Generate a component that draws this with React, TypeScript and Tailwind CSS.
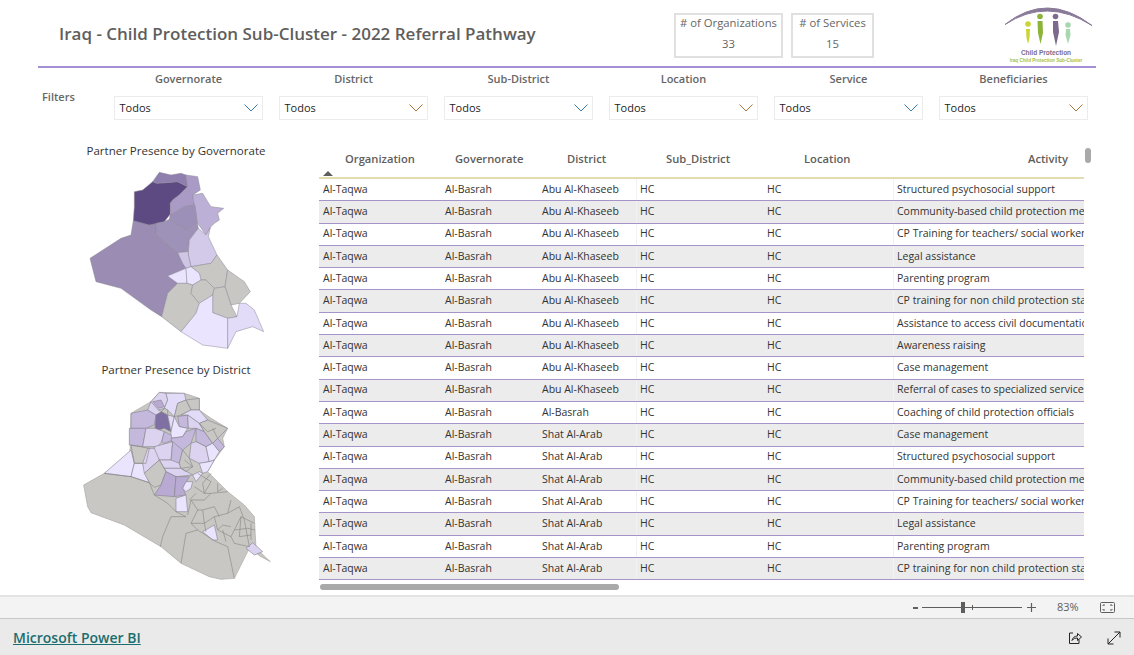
const FONT = "font-['Open_Sans','Noto_Sans',sans-serif]";

const filters = [
  { label: 'Governorate', tint: '#3a7ca8' },
  { label: 'District', tint: '#a8753a' },
  { label: 'Sub-District', tint: '#3a7ca8' },
  { label: 'Location', tint: '#a8753a' },
  { label: 'Service', tint: '#3a7ca8' },
  { label: 'Beneficiaries', tint: '#a8753a' },
];

const rows = [
  ['Abu Al-Khaseeb', 'Structured psychosocial support'],
  ['Abu Al-Khaseeb', 'Community-based child protection mechanisms'],
  ['Abu Al-Khaseeb', 'CP Training for teachers/ social workers'],
  ['Abu Al-Khaseeb', 'Legal assistance'],
  ['Abu Al-Khaseeb', 'Parenting program'],
  ['Abu Al-Khaseeb', 'CP training for non child protection staff'],
  ['Abu Al-Khaseeb', 'Assistance to access civil documentation'],
  ['Abu Al-Khaseeb', 'Awareness raising'],
  ['Abu Al-Khaseeb', 'Case management'],
  ['Abu Al-Khaseeb', 'Referral of cases to specialized services'],
  ['Al-Basrah', 'Coaching of child protection officials'],
  ['Shat Al-Arab', 'Case management'],
  ['Shat Al-Arab', 'Structured psychosocial support'],
  ['Shat Al-Arab', 'Community-based child protection mechanisms'],
  ['Shat Al-Arab', 'CP Training for teachers/ social workers'],
  ['Shat Al-Arab', 'Legal assistance'],
  ['Shat Al-Arab', 'Parenting program'],
  ['Shat Al-Arab', 'CP training for non child protection staff'],
];

const governorates: [string, string][] = [
  ['#9a8cb3', '187,242 235,255 255,250 255,280 285,310 320,338 335,370 345,385 290,408 320,430 290,460 272,530 240,510 150,445 75,425 57,355 150,295 180,285'],
  ['#5d4a82', '190,155 215,150 245,125 258,130 320,125 350,140 325,165 305,180 298,190 298,222 280,245 235,255 187,242 190,200'],
  ['#8e7fae', '245,125 265,97 300,105 330,100 345,105 350,140 320,125 258,130'],
  ['#a99bc5', '350,140 345,105 380,110 388,150 365,165 370,195 340,200 300,225 298,190 305,180 325,165'],
  ['#bdb0d6', '365,165 395,160 410,185 420,200 458,205 440,220 445,240 430,250 418,262 405,285 380,250 378,245 372,198 370,195'],
  ['#9d90b8', '298,222 300,225 340,200 370,195 372,198 378,245 350,272 295,238'],
  ['#9e92b8', '255,250 280,245 295,238 350,272 378,245 382,265 355,300 352,335 345,335 320,338 285,310 255,280'],
  ['#d3c9e8', '382,265 405,285 418,262 412,290 438,345 420,370 360,380 352,345 352,335 355,300'],
  ['#cfc5e5', '345,335 352,335 352,345 360,380 345,385 335,370 320,338'],
  ['#c8c7c4', '360,380 420,370 438,345 470,390 462,440 430,445 405,420 390,420 385,400'],
  ['#ebe4ff', '290,408 345,385 348,430 320,430'],
  ['#ebe4ff', '345,385 360,380 385,400 390,420 365,435 348,430'],
  ['#c8c7c4', '320,430 348,430 365,435 360,460 385,490 375,520 330,575 272,530 290,460'],
  ['#c8c7c4', '365,435 390,420 405,420 430,445 425,465 385,490 360,460'],
  ['#c8c7c4', '470,390 520,425 538,455 505,490 480,495 462,440'],
  ['#c8c7c4', '430,445 462,440 480,495 498,530 470,535 425,518 425,465'],
  ['#ebe4ff', '385,490 425,465 425,518 470,535 470,625 395,615 330,575 375,520'],
  ['#e3dcf8', '470,535 498,530 505,490 525,490 550,510 578,575 545,560 495,575 470,625'],
];

const districts: [string, string][] = [
  ['#dcd3f0', '240,125 265,97 285,100 290,120 280,145 262,150 240,145'],
  ['#b8aad2', '245,125 270,120 280,140 262,145'],
  ['#e3dcf8', '285,100 340,100 345,120 320,130 310,170 290,150 280,145 290,120'],
  ['#c4b8dd', '180,160 230,150 255,165 250,195 225,205 180,205'],
  ['#dcd3f0', '230,150 240,125 262,150 272,155 255,165'],
  ['#7f6fa3', '255,165 272,155 290,165 300,215 280,205 262,210 252,205'],
  ['#e3dcf8', '290,165 310,170 300,215'],
  ['#c4b8dd', '175,205 225,205 215,260 175,255'],
  ['#dcd3f0', '225,205 252,205 280,215 272,245 260,260 215,260'],
  ['#c4b8dd', '320,170 350,165 352,205 325,200'],
  ['#ebe4ff', '300,215 310,170 325,200 350,205 335,230 300,235'],
  ['#c4b8dd', '272,245 280,215 300,225 305,240 280,250'],
  ['#c4b8dd', '300,235 335,230 345,215 375,205 360,250 335,270 305,262'],
  ['#c8c7c4', '345,120 385,115 385,150 360,150'],
  ['#c8c7c4', '310,170 320,130 345,120 360,150 330,165'],
  ['#c8c7c4', '280,145 290,150 290,165 272,155'],
  ['#e3dcf8', '330,165 360,150 385,150 410,180 385,190 350,165'],
  ['#dcd3f0', '350,165 385,190 400,215 375,205 352,205'],
  ['#c4b8dd', '375,205 400,215 425,250 405,260 375,245'],
  ['#c8c7c4', '385,190 410,180 470,205 440,235 425,250 400,215'],
  ['#dcd3f0', '360,250 375,245 405,260 415,305 385,310 355,295'],
  ['#c4b8dd', '425,250 440,235 460,260 445,275'],
  ['#ebe4ff', '405,260 425,250 445,275 430,300 415,305'],
  ['#dcd3f0', '250,260 305,245 300,300 265,300 250,280'],
  ['#c4b8dd', '305,245 335,270 325,310 300,305'],
  ['#dcd3f0', '265,300 300,300 325,310 330,325 280,325'],
  ['#c8c7c4', '335,270 355,295 365,320 330,325 325,310'],
  ['#dcd3f0', '280,325 330,325 365,345 315,350 285,335'],
  ['#ebe4ff', '100,340 180,270 190,310 180,350'],
  ['#ebe4ff', '180,350 190,310 215,310 235,368'],
  ['#dcd3f0', '215,310 230,265 250,265 265,300 220,340'],
  ['#c8c7c4', '235,368 220,340 265,300 285,335 270,375 250,382'],
  ['#b8aad2', '250,405 270,375 285,335 315,350 310,410'],
  ['#b8aad2', '315,350 355,350 335,385 345,405 310,410'],
  ['#ebe4ff', '315,415 345,405 350,455 315,455'],
  ['#ebe4ff', '365,345 385,335 395,340 375,365'],
  ['#ebe4ff', '345,365 365,365 360,385 345,395 335,385'],
  ['#ebe4ff', '385,310 415,305 430,300 410,335 395,340'],
  ['#ebe4ff', '395,515 430,495 440,540 425,540'],
  ['#dcd3f0', '525,565 545,548 575,575 550,585'],
];

const districtLines = [
  '100,340 180,350 235,368 250,405 290,430 315,455 345,470',
  '345,470 300,470 275,530 268,560',
  '380,510 345,520 330,610',
  '380,510 435,545 470,560 490,655',
  '350,465 360,420 400,420 420,400 470,395',
  '360,420 380,450 360,490 400,490 430,470 470,460 480,420',
  '430,470 440,510 480,530 510,470 550,490',
  '480,530 490,550 535,560 520,480',
  '400,490 405,515',
  '370,380 400,400 420,400',
  '400,400 395,370 420,340',
  '440,370 440,395 455,385',
  '540,490 540,540',
  '470,460 505,440 520,480',
  '455,510 465,545',
  '510,470 505,530',
  '395,450 430,440 445,470',
  '380,450 395,450 400,490',
  '360,490 380,510',
  '490,510 530,505 552,510',
  '505,530 540,525',
  '440,510 455,495 480,500',
  '375,400 355,420',
  '385,190 410,215 435,205',
  '440,235 425,205',
  '180,255 235,265 225,310 190,310 180,255',
  '340,300 365,320 345,335 330,325',
  '380,340 420,365 400,400',
];

const OUTLINE =
  '38,375 100,340 175,290 178,255 180,160 240,125 265,97 340,100 385,115 385,150 420,175 470,205 455,235 460,260 430,300 410,335 470,395 520,435 550,470 552,510 555,565 598,605 570,590 535,565 490,655 450,658 415,650 330,610 270,560 160,495 60,458 50,440';

function GovernorateMap() {
  return (
    <svg width="210" height="220" viewBox="0 0 630 660">
      {governorates.map(([fill, points], i) => (
        <polygon key={i} points={points} fill={fill} stroke="#8a8794" strokeWidth="1.500" strokeLinejoin="round" />
      ))}
    </svg>
  );
}

function DistrictMap() {
  return (
    <svg width="210" height="220" viewBox="0 0 630 660">
      <polygon points={OUTLINE} fill="#c8c7c4" stroke="#a9a8a5" strokeWidth="2" />
      {districts.map(([fill, points], i) => (
        <polygon key={i} points={points} fill={fill} stroke="#85838c" strokeWidth="1.800" strokeLinejoin="round" />
      ))}
      {districtLines.map((points, i) => (
        <polyline key={i} points={points} fill="none" stroke="#85857f" strokeWidth="1.800" />
      ))}
    </svg>
  );
}

function Logo() {
  return (
    <svg width="96" height="66" viewBox="1000 0 96 66">
      <path d="M1005 24.500 Q1047 -9 1092 25.500 Q1047 -3 1005 24.500 Z" fill="#8a7a9a" stroke="#8a7a9a" strokeWidth="1" />
      <circle cx="1028" cy="24" r="2.800" fill="#c9d530" />
      <path d="M1026 29 h4 l-.5 9 l-1.500 6 l-1.500 -6 Z" fill="#c9d530" />
      <circle cx="1040" cy="16.500" r="2.800" fill="#8cb33a" />
      <path d="M1037.500 21 h5 l.5 12 l-2.500 11 l-2.500 -11 Z" fill="#8cb33a" />
      <circle cx="1055.500" cy="16.500" r="2.800" fill="#7d6a8c" />
      <path d="M1053 21 h5 l1 11 l-3 14 l-3 -14 Z" fill="#7d6a8c" />
      <circle cx="1068" cy="25" r="2.800" fill="#a8d8b0" />
      <path d="M1066 29 h4 l.5 6 l-2.500 9 l-2.500 -9 Z" fill="#a8d8b0" />
      <text x="1046" y="55" textAnchor="middle" fontSize="6.500" fontWeight="700" fill="#7d6a8c" fontFamily="Liberation Sans, sans-serif">
        Child Protection
      </text>
      <text x="1046" y="62" textAnchor="middle" fontSize="4.600" fontWeight="700" fill="#a3c14a" fontFamily="Liberation Sans, sans-serif">
        Iraq Child Protection Sub-Cluster
      </text>
    </svg>
  );
}

export default function App() {
  return (
    <div className={`flex h-[655px] w-[1134px] flex-col overflow-hidden bg-white ${FONT}`}>
      <div className="h-[595px] shrink-0">
        {/* Title, cards and logo */}
        <div className="mx-[38px] flex h-[68px] items-start border-b-2 border-[#a48fd6]">
          <h1 className="mt-[22px] ml-[21px] w-[615px] shrink-0 text-[17px] leading-6 font-semibold whitespace-nowrap text-[#605e5c]">
            Iraq - Child Protection Sub-Cluster - 2022 Referral Pathway
          </h1>
          <div className="mt-[13px] flex h-[45px] w-[109px] shrink-0 flex-col items-center border-2 border-[#e0e0e0] text-[11.300px] leading-4 text-[#666666]">
            <span># of Organizations</span>
            <span className="mt-[5px]">33</span>
          </div>
          <div className="mt-[13px] ml-2 flex h-[45px] w-[83px] shrink-0 flex-col items-center border-2 border-[#e0e0e0] text-[11.300px] leading-4 text-[#666666]">
            <span># of Services</span>
            <span className="mt-[5px]">15</span>
          </div>
          <div className="ml-[126px] shrink-0">
            <Logo />
          </div>
        </div>

        {/* Filters */}
        <div className="flex pt-[3px] pl-[42px]">
          <span className="mt-[18px] w-[72px] text-[11px] leading-4 font-semibold text-[#666666]">Filters</span>
          <div className="flex gap-4">
            {filters.map((f) => (
              <div key={f.label} className="w-[149px]">
                <div className="text-center text-[11px] leading-4 font-semibold text-[#666666]">{f.label}</div>
                <div className="mt-[9px] flex h-[24px] items-center justify-between border border-[#ececec] pr-[4px] pl-[4.500px] text-[11px] text-[#252423]">
                  <span>Todos</span>
                  <svg width="14" height="8" viewBox="0 0 14 8" fill="none" stroke={f.tint}>
                    <path d="M.5 .5L7 7L13.500 .5" />
                  </svg>
                </div>
              </div>
            ))}
          </div>
        </div>

        <div className="mt-[23px] flex items-start">
          {/* Maps */}
          <div className="flex w-[319px] flex-col pl-[71px]">
            <div className="w-[210px] text-center text-[11.500px] leading-4 text-[#333333]">Partner Presence by Governorate</div>
            <div className="-mt-[19px] h-[220px]">
              <GovernorateMap />
            </div>
            <div className="mt-[2px] w-[210px] text-center text-[11.500px] leading-4 text-[#333333]">Partner Presence by District</div>
            <div className="-mt-[18px] h-[220px]">
              <DistrictMap />
            </div>
          </div>

          {/* Table */}
          <div className="relative -mt-[1px] w-[772px]">
            <div className="w-[765px] overflow-hidden">
              <div className="grid h-[37px] grid-cols-[122px_97px_98px_127px_130px_191px] items-center border-b-2 border-[#e3dcae] text-[11.200px] font-semibold text-[#605e5c]">
                <span className="relative pl-[26px]">
                  Organization
                  <svg className="absolute top-[20px] left-[4px]" width="10" height="6" viewBox="0 0 10 6">
                    <polygon points="0,5 5,0 10,5" fill="#605e5c" />
                  </svg>
                </span>
                <span className="pl-[14px]">Governorate</span>
                <span className="pl-[29px]">District</span>
                <span className="pl-[30px]">Sub_District</span>
                <span className="pl-[41px]">Location</span>
                <span className="pr-[16px] text-right">Activity</span>
              </div>
              {rows.map(([district, activity], i) => (
                <div
                  key={i}
                  className={`grid h-[22.300px] grid-cols-[122px_97px_98px_127px_130px_191px] items-center border-b border-[#a594c9] text-[10.500px] whitespace-nowrap text-[#333333] ${
                    i % 2 === 1 ? 'bg-[#ececec]' : 'bg-white'
                  }`}
                >
                  <span className="pl-1">Al-Taqwa</span>
                  <span className="pl-1">Al-Basrah</span>
                  <span className="pl-1">{district}</span>
                  <span className="flex h-full items-center border-l border-[#f2f2f2] pl-[3px]">HC</span>
                  <span className="pl-1">HC</span>
                  <span className="flex h-full items-center overflow-hidden border-l border-[#f2f2f2] pl-[3px]">{activity}</span>
                </div>
              ))}
            </div>
            <div className="mt-[4px] ml-px h-[6px] w-[299px] rounded-full bg-[#a9a9a9]" />
            <div className="absolute top-[6px] left-[766px] h-[15px] w-[6px] rounded-full bg-[#a9a9a9]" />
          </div>
        </div>
      </div>

      {/* Zoom bar */}
      <div className="flex h-[23px] shrink-0 items-center border-t-2 border-[#e3e3e3] bg-[#f3f3f3] pl-[913px] text-[11px] text-[#605e5c]">
        <span className="h-[2px] w-[5px] bg-[#605e5c]" />
        <div className="relative ml-[4px] flex h-[11px] w-[100px] items-center">
          <div className="h-px w-full bg-[#605e5c]" />
          <div className="absolute left-[39px] h-[11px] w-[4px] bg-[#605e5c]" />
          <div className="absolute left-[50px] h-[5px] w-px bg-[#605e5c]" />
        </div>
        <svg className="ml-[5px]" width="9" height="9" viewBox="0 0 9 9">
          <path d="M0 4.500H9M4.500 0V9" stroke="#605e5c" strokeWidth="1.200" />
        </svg>
        <span className="ml-[21px] w-[24px]">83%</span>
        <svg className="ml-[19px]" width="15" height="11" viewBox="0 0 15 11" fill="none">
          <rect x="0.500" y="0.500" width="14" height="10" rx="1" stroke="#605e5c" />
          <path d="M3 4V3H5M10 3H12V4M12 7V8H10M5 8H3V7" stroke="#605e5c" />
        </svg>
      </div>

      {/* Footer */}
      <div className="flex flex-1 items-center justify-between border-t border-[#c8c8c8] bg-[#eaeaea] px-[13px] pt-[1px]">
        <a href="#" className="text-[14px] font-semibold text-[#1b6e6e] underline">
          Microsoft Power BI
        </a>
        <div className="flex items-center gap-[25px]">
          <svg width="14" height="14" viewBox="0 0 14 14" fill="none" stroke="#252423">
            <path d="M5 2H1.500V12.500H11V8.500" />
            <path d="M4 9.500C4.500 6.500 7 5 9.500 5V2.500L13.500 6L9.500 9.500V7C7.500 7 5.500 7.500 4 9.500Z" />
          </svg>
          <svg width="14" height="14" viewBox="0 0 14 14" fill="none" stroke="#252423">
            <path d="M1 13L13 1M7.500 1H13V6.500M1 7.500V13H6.500" />
          </svg>
        </div>
      </div>
    </div>
  );
}
